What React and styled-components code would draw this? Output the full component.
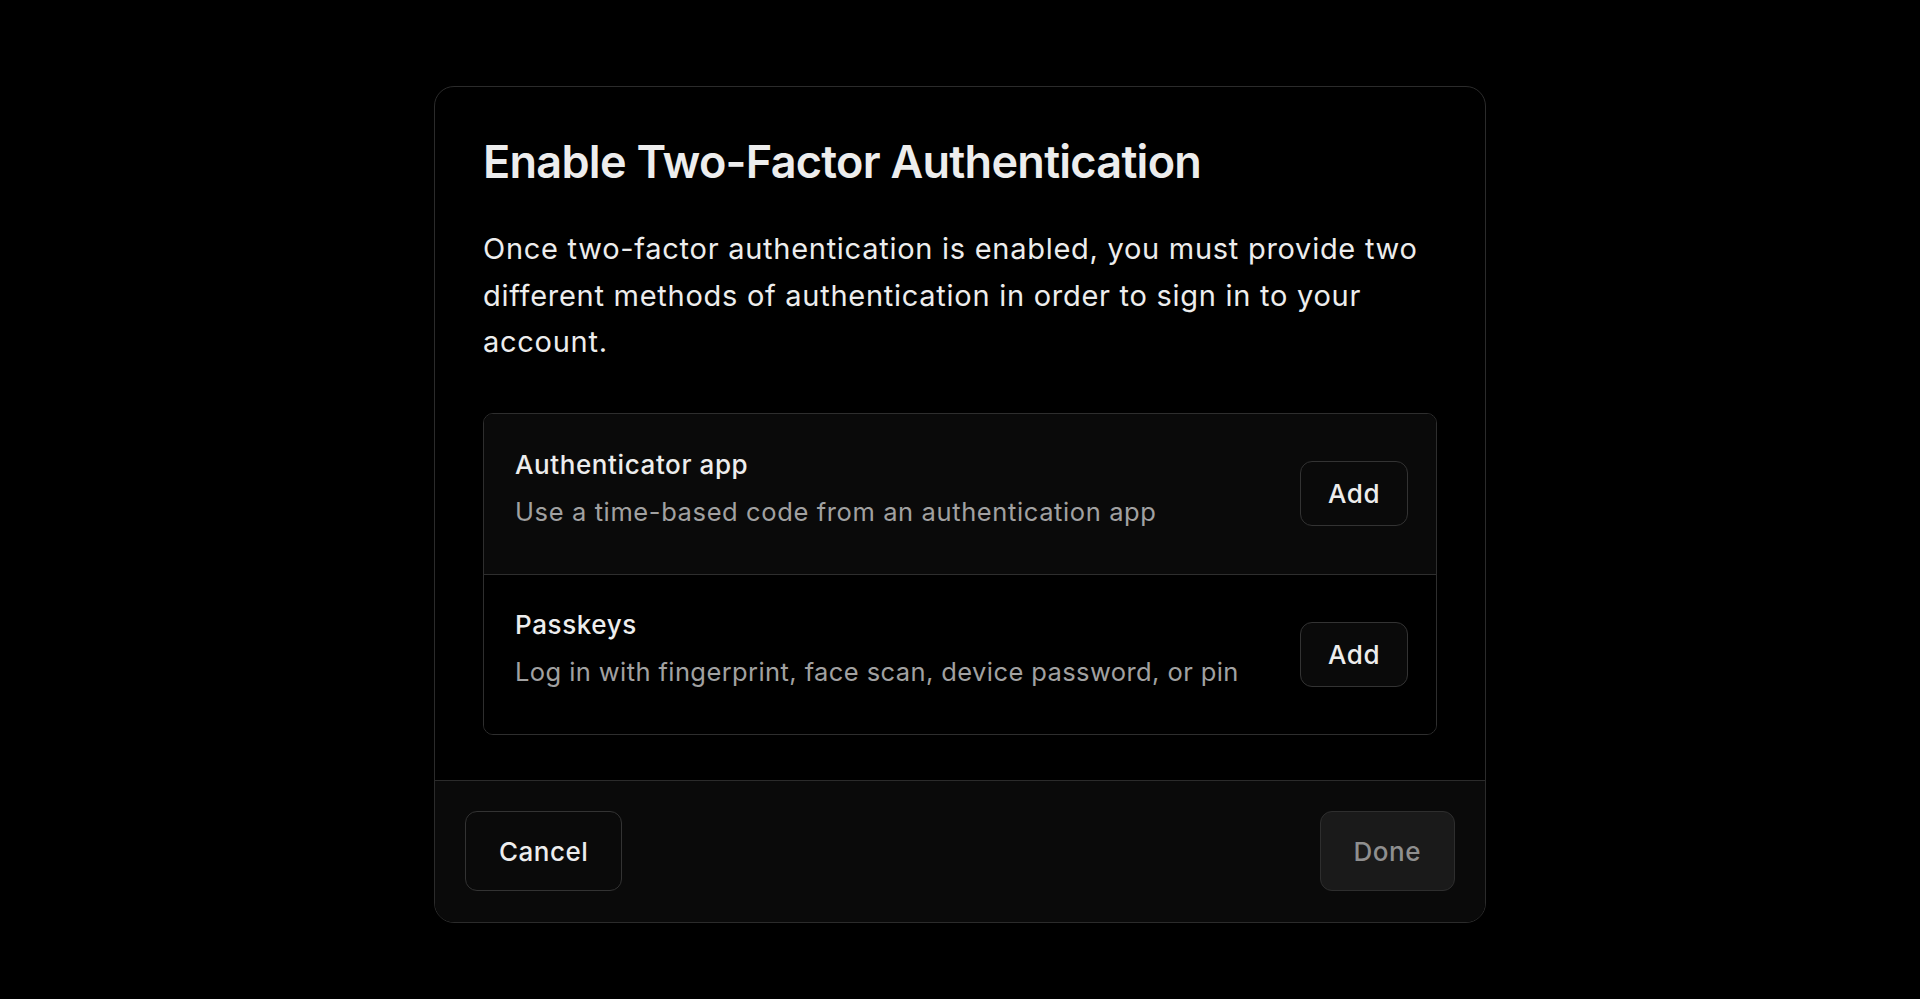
import React from 'react';
import styled, { createGlobalStyle } from 'styled-components';

const GlobalStyle = createGlobalStyle`
    html, body {
        margin: 0;
        padding: 0;
        background: #000;
    }
    body {
        font-family: Inter, "Noto Sans", sans-serif;
        -webkit-font-smoothing: antialiased;
    }
`;

const Page = styled.div`
    width: 100vw;
    height: 100vh;
    display: flex;
    justify-content: center;
    align-items: center;
    padding-top: 10px;
    box-sizing: border-box;
    background: #000;
`;

const Modal = styled.div`
    width: 1052px;
    box-sizing: border-box;
    border: 1px solid #2b2b2b;
    border-radius: 20px;
    background: #000;
    overflow: hidden;
    display: flex;
    flex-direction: column;
`;

const Body = styled.div`
    padding: 48px 48px 45px;
`;

const Title = styled.h1`
    margin: 0;
    font-size: 45px;
    line-height: 54px;
    font-weight: 600;
    letter-spacing: -0.016em;
    color: #ededed;
`;

const Description = styled.p`
    margin: 37px 0 0;
    font-size: 29px;
    line-height: 46.5px;
    font-weight: 400;
    letter-spacing: 0.025em;
    color: #ededed;
`;

const Methods = styled.div`
    margin-top: 47px;
    border: 1px solid #2e2e2e;
    border-radius: 10px;
    overflow: hidden;
`;

const Method = styled.div`
    height: 160px;
    box-sizing: border-box;
    padding: 0 28px 0 31px;
    display: flex;
    align-items: center;
    justify-content: space-between;
    background: ${props => props.highlighted ? '#0a0a0a' : '#000'};
    & + & {
        border-top: 1px solid #2e2e2e;
    }
`;

const MethodText = styled.div`
    display: flex;
    flex-direction: column;
    gap: 15px;
    margin-top: -11px;
`;

const MethodName = styled.div`
    font-size: 26px;
    line-height: 32px;
    font-weight: 500;
    letter-spacing: 0.023em;
    color: #ededed;
`;

const MethodHint = styled.div`
    font-size: 25.5px;
    line-height: 32px;
    font-weight: 400;
    letter-spacing: ${props => props.tight ? '0.016em' : '0.024em'};
    color: #a1a1a1;
`;

const Button = styled.button`
    box-sizing: border-box;
    height: ${props => props.tall ? '80px' : '65px'};
    padding: 0 ${props => props.tall ? '33px' : '27px'};
    border-radius: 12px;
    border: 1px solid ${props => props.disabled ? '#2e2e2e' : '#333'};
    background: ${props => props.disabled ? '#1a1a1a' : '#0a0a0a'};
    color: ${props => props.disabled ? '#8f8f8f' : '#ededed'};
    font-family: inherit;
    font-size: 26px;
    font-weight: 500;
    letter-spacing: 0.02em;
    cursor: ${props => props.disabled ? 'not-allowed' : 'pointer'};
`;

const Footer = styled.div`
    height: 142px;
    box-sizing: border-box;
    padding: 0 30px;
    display: flex;
    align-items: center;
    justify-content: space-between;
    border-top: 1px solid #2b2b2b;
    background: #0a0a0a;
`;

const methods = [
    {
        name: 'Authenticator app',
        hint: 'Use a time-based code from an authentication app',
        highlighted: true
    },
    {
        name: 'Passkeys',
        hint: 'Log in with fingerprint, face scan, device password, or pin',
        highlighted: false,
        tight: true
    }
];

const App = () => {
    return (
        <Page>
            <GlobalStyle/>
            <Modal>
                <Body>
                    <Title>Enable Two-Factor Authentication</Title>
                    <Description>
                        Once two-factor authentication is enabled, you must provide two different methods of authentication in order to sign in to your account.
                    </Description>
                    <Methods>
                        {methods.map(m => (
                            <Method key={m.name} highlighted={m.highlighted}>
                                <MethodText>
                                    <MethodName>{m.name}</MethodName>
                                    <MethodHint tight={m.tight}>{m.hint}</MethodHint>
                                </MethodText>
                                <Button>Add</Button>
                            </Method>
                        ))}
                    </Methods>
                </Body>
                <Footer>
                    <Button tall>Cancel</Button>
                    <Button tall disabled>Done</Button>
                </Footer>
            </Modal>
        </Page>
    );
};

export default App;
